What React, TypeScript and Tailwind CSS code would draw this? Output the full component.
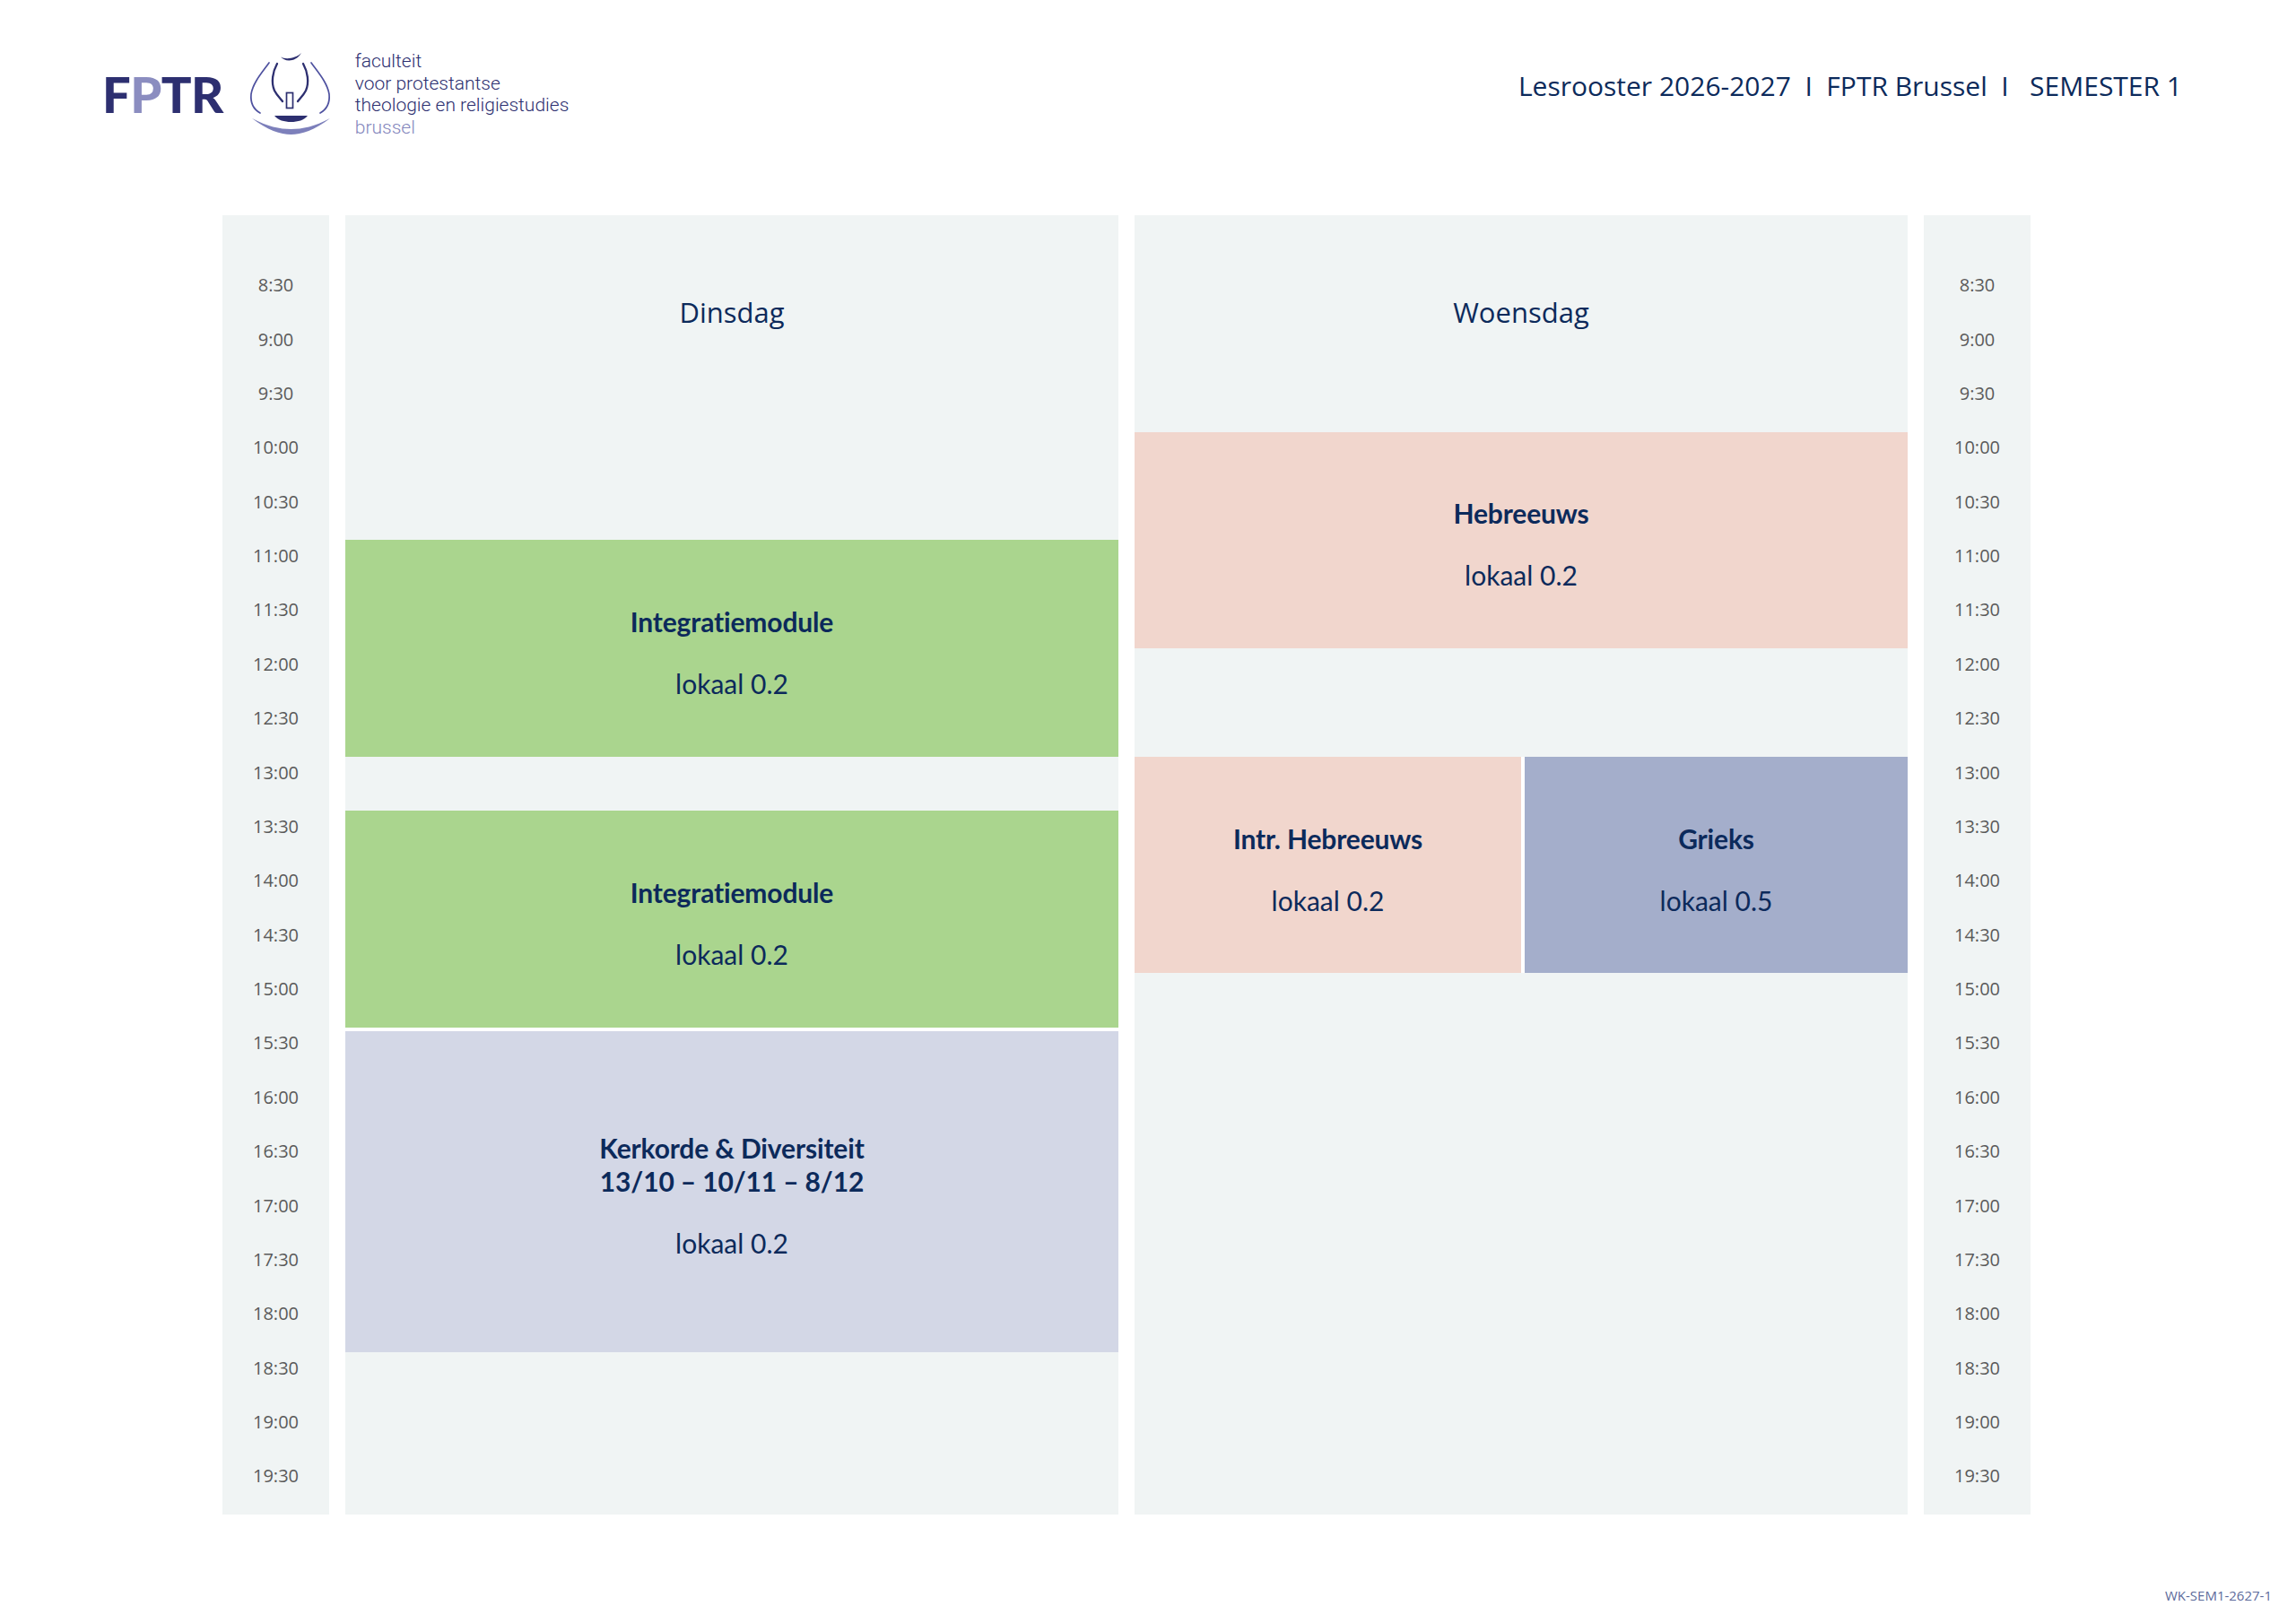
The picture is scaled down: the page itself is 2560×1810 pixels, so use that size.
const times = [
  "8:30", "9:00", "9:30", "10:00", "10:30", "11:00", "11:30", "12:00", "12:30", "13:00", "13:30", "14:00",
  "14:30", "15:00", "15:30", "16:00", "16:30", "17:00", "17:30", "18:00", "18:30", "19:00", "19:30",
];

type Lesson = { title: string[]; room: string; className: string };

const dinsdag: Lesson[] = [
  { title: ["Integratiemodule"], room: "lokaal 0.2", className: "row-start-7 row-span-4 bg-[#aad58e]" },
  { title: ["Integratiemodule"], room: "lokaal 0.2", className: "row-start-12 row-span-4 bg-[#aad58e]" },
  {
    title: ["Kerkorde & Diversiteit", "13/10 – 10/11 – 8/12"],
    room: "lokaal 0.2",
    className: "row-start-16 row-span-6 border-t-4 border-white bg-[#d3d7e6]",
  },
];

const woensdag: Lesson[] = [
  { title: ["Hebreeuws"], room: "lokaal 0.2", className: "col-span-2 row-start-5 row-span-4 bg-[#f1d6cd]" },
  { title: ["Intr. Hebreeuws"], room: "lokaal 0.2", className: "col-start-1 row-start-11 row-span-4 bg-[#f1d6cd]" },
  {
    title: ["Grieks"],
    room: "lokaal 0.5",
    className: "col-start-2 row-start-11 row-span-4 border-l-4 border-white bg-[#a4aecb]",
  },
];

function Logo() {
  return (
    <div className="flex h-[110px] items-center">
      <span className="font-['Lato',sans-serif] text-[56px] font-black leading-none tracking-[-0.01em] text-[#2d2f70]">
        F<span className="text-[#8b8dc0]">P</span>TR
      </span>
      <svg viewBox="0 0 120 110" className="ml-[14px] h-[110px] w-[120px]">
        <path d="M50,13.5 C54,18.5 66,20.5 73,9 C67,15 56,17 50,13.5 Z" fill="#2d2f70" />
        <path d="M46,21 C41,30 39,42 43,51 C46,57 50,60 52,63" fill="none" stroke="#2d2f70" strokeWidth="2.3" strokeLinecap="round" />
        <path d="M75,21 C80,30 82,42 78,51 C75,57 71,60 69,63" fill="none" stroke="#2d2f70" strokeWidth="2.3" strokeLinecap="round" />
        <path d="M37,20 C30,30 19,42 17,55 C16,65 20,72 27,76" fill="none" stroke="#4f52a0" strokeWidth="1.7" strokeLinecap="round" />
        <path d="M84,20 C91,30 102,42 104,55 C105,65 101,72 94,76" fill="none" stroke="#4f52a0" strokeWidth="1.7" strokeLinecap="round" />
        <rect x="56.5" y="53.5" width="7" height="17" fill="none" stroke="#2d2f70" strokeWidth="1.7" />
        <path d="M43,79 L80,79 C76,84 69,86 61.5,86 C54,86 47,84 43,79 Z" fill="#2d2f70" />
        <path
          d="M18,82 C35,95 50,100 61.5,100 C73,100 88,95 105,82 C88,91 74,94 61.5,94 C49,94 35,91 18,82 Z"
          fill="#7d80bb"
        />
      </svg>
      <div className="ml-[13px] font-['Roboto',sans-serif] text-[21px] font-light leading-[24.5px] text-[#2d2f70]">
        <p>faculteit</p>
        <p>voor protestantse</p>
        <p>theologie en religiestudies</p>
        <p className="text-[#8587bd]">brussel</p>
      </div>
    </div>
  );
}

function TimeColumn() {
  return (
    <div className="flex h-[1449px] w-[119px] flex-col bg-[#f0f4f4] pt-[48px]">
      {times.map((t) => (
        <div key={t} className="flex h-[60.375px] shrink-0 items-center justify-center text-[20px] text-[#5a5a5a]">
          {t}
        </div>
      ))}
    </div>
  );
}

function LessonBlock({ lesson }: { lesson: Lesson }) {
  return (
    <div className={`flex flex-col items-center justify-center pt-[10px] font-['Lato',sans-serif] text-[30px] ${lesson.className}`}>
      <div className="text-center font-bold leading-[37px] tracking-[-0.005em]">
        {lesson.title.map((line) => (
          <p key={line}>{line}</p>
        ))}
      </div>
      <p className="mt-[32px] leading-[37px]">{lesson.room}</p>
    </div>
  );
}

function DayColumn({ name, lessons, split }: { name: string; lessons: Lesson[]; split?: boolean }) {
  return (
    <div className={`grid h-[1449px] w-[862px] grid-rows-24 bg-[#f0f4f4] ${split ? "grid-cols-2" : "grid-cols-1"}`}>
      <div className="col-span-full row-start-1 row-span-4 flex justify-center pt-[88px]">
        <h2 className="text-[31px] font-medium leading-[40px]">{name}</h2>
      </div>
      {lessons.map((l) => (
        <LessonBlock key={l.className} lesson={l} />
      ))}
    </div>
  );
}

export default function App() {
  return (
    <div className="min-h-[1810px] w-[2560px] bg-white font-['Open_Sans',sans-serif] text-[#0c2a5b]">
      <header className="flex items-start justify-between pl-[114px] pr-[127px] pt-[50px]">
        <Logo />
        <p className="mt-[28px] whitespace-pre text-[30px] leading-[36px]">
          Lesrooster 2026-2027  I  FPTR Brussel  I   SEMESTER 1
        </p>
      </header>

      <main className="ml-[248px] mt-[80px] flex gap-[18px]">
        <TimeColumn />
        <DayColumn name="Dinsdag" lessons={dinsdag} />
        <DayColumn name="Woensdag" lessons={woensdag} split />
        <TimeColumn />
      </main>

      <footer className="mt-[79px] flex justify-end pr-[27px] text-[15px] leading-[22px] text-[#5d6b9b]">
        WK-SEM1-2627-1
      </footer>
    </div>
  );
}
